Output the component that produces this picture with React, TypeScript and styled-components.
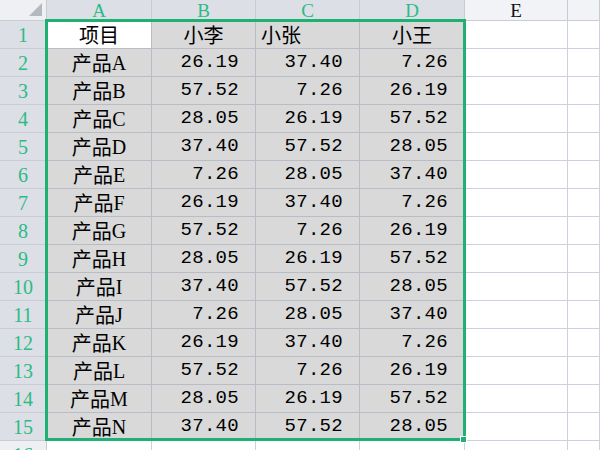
import React from "react";
import styled, { createGlobalStyle } from "styled-components";

const Global = createGlobalStyle`
  html, body { margin: 0; padding: 0; background: #ffffff; }
  body { overflow: hidden; }
`;

const GREEN = "#1fb074";
const GREEN_TEXT = "#2dbb86";

const Wrap = styled.div`
  position: relative;
  width: 600px;
  height: 450px;
  overflow: hidden;
  background: #fff;
`;

const Sheet = styled.div`
  display: grid;
  grid-template-columns: 47px 105px 104px 104px 105px 103px 1fr;
  grid-template-rows: 21px repeat(16, 28px);
  width: 600px;
`;

const Corner = styled.div`
  position: relative;
  background: #eef0f4;
  border-right: 1px solid #c9ccd4;
  border-bottom: 1px solid #c9ccd4;
  &::after {
    content: "";
    position: absolute;
    right: 4px;
    bottom: 4px;
    width: 0;
    height: 0;
    border-left: 13px solid transparent;
    border-bottom: 13px solid #b4b8bf;
  }
`;

const ColHead = styled.div<{ $sel?: boolean }>`
  display: flex;
  align-items: center;
  justify-content: center;
  background: ${(p) => (p.$sel ? "#dcdfe5" : "#f1f3f7")};
  border-right: 1px solid #c9ccd4;
  border-bottom: 1px solid #c9ccd4;
  color: ${(p) => (p.$sel ? GREEN_TEXT : "#111")};
  font-family: "Liberation Serif", serif;
  font-size: 19px;
  line-height: 1;
  padding-top: 1px;
`;

const RowHead = styled.div<{ $sel?: boolean }>`
  display: flex;
  align-items: center;
  justify-content: center;
  background: ${(p) => (p.$sel ? "#dcdfe5" : "#eef0f4")};
  border-right: 1px solid #c9ccd4;
  border-bottom: 1px solid #c9ccd4;
  color: ${GREEN_TEXT};
  font-family: "Liberation Serif", serif;
  font-size: 20px;
  line-height: 1;
`;

const Cell = styled.div<{ $align?: "left" | "center" | "right"; $sel?: boolean; $active?: boolean }>`
  display: flex;
  align-items: center;
  justify-content: ${(p) =>
    p.$align === "right" ? "flex-end" : p.$align === "center" ? "center" : "flex-start"};
  padding: ${(p) => (p.$align === "right" ? "0 16px 0 0" : p.$align === "left" ? "0 0 0 5px" : "0")};
  background: ${(p) => (p.$active ? "#ffffff" : p.$sel ? "#d9d9d9" : "#ffffff")};
  border-right: 1px solid ${(p) => (p.$sel ? "#b9bcc6" : "#cdd0de")};
  border-bottom: 1px solid ${(p) => (p.$sel ? "#b9bcc6" : "#cdd0de")};
  color: #000;
  font-family: "Liberation Mono", "Noto Sans CJK SC", monospace;
  font-size: 20px;
  line-height: 1;
  white-space: nowrap;
  overflow: hidden;
`;

const Num = styled.span`
  font-family: "Liberation Mono", monospace;
  font-size: 19px;
  letter-spacing: 0.3px;
`;

const Label = styled.span`
  font-family: "Noto Sans CJK SC", sans-serif;
  font-size: 20px;
  font-weight: 400;
`;

const Latin = styled.span`
  font-family: "Liberation Serif", serif;
  font-size: 20px;
`;

const Selection = styled.div`
  position: absolute;
  left: 45px;
  top: 19px;
  width: 421px;
  height: 422px;
  border: 3px solid ${GREEN};
  box-sizing: border-box;
  pointer-events: none;
`;

const Handle = styled.div`
  position: absolute;
  left: 460px;
  top: 436px;
  width: 7px;
  height: 7px;
  background: ${GREEN};
  border: 1px solid #fff;
  box-sizing: border-box;
`;

const data: [string, string, string, string][] = [
  ["A", "26.19", "37.40", "7.26"],
  ["B", "57.52", "7.26", "26.19"],
  ["C", "28.05", "26.19", "57.52"],
  ["D", "37.40", "57.52", "28.05"],
  ["E", "7.26", "28.05", "37.40"],
  ["F", "26.19", "37.40", "7.26"],
  ["G", "57.52", "7.26", "26.19"],
  ["H", "28.05", "26.19", "57.52"],
  ["I", "37.40", "57.52", "28.05"],
  ["J", "7.26", "28.05", "37.40"],
  ["K", "26.19", "37.40", "7.26"],
  ["L", "57.52", "7.26", "26.19"],
  ["M", "28.05", "26.19", "57.52"],
  ["N", "37.40", "57.52", "28.05"],
];

export default function App() {
  const cols = ["A", "B", "C", "D", "E", ""];
  return (
    <Wrap>
      <Global />
      <Sheet>
        <Corner />
        {cols.map((c, i) => (
          <ColHead key={"h" + i} $sel={i < 4}>
            {c}
          </ColHead>
        ))}

        <RowHead $sel>1</RowHead>
        <Cell $align="center" $sel $active>
          <Label>项目</Label>
        </Cell>
        <Cell $align="center" $sel>
          <Label>小李</Label>
        </Cell>
        <Cell $align="left" $sel>
          <Label>小张</Label>
        </Cell>
        <Cell $align="center" $sel>
          <Label>小王</Label>
        </Cell>
        <Cell />
        <Cell />

        {data.map((r, i) => (
          <React.Fragment key={i}>
            <RowHead $sel>{i + 2}</RowHead>
            <Cell $align="center" $sel>
              <Label>产品</Label>
              <Latin>{r[0]}</Latin>
            </Cell>
            <Cell $align="right" $sel>
              <Num>{r[1]}</Num>
            </Cell>
            <Cell $align="right" $sel>
              <Num>{r[2]}</Num>
            </Cell>
            <Cell $align="right" $sel>
              <Num>{r[3]}</Num>
            </Cell>
            <Cell />
            <Cell />
          </React.Fragment>
        ))}

        <RowHead>16</RowHead>
        <Cell />
        <Cell />
        <Cell />
        <Cell />
        <Cell />
        <Cell />
      </Sheet>
      <Selection />
      <Handle />
    </Wrap>
  );
}
